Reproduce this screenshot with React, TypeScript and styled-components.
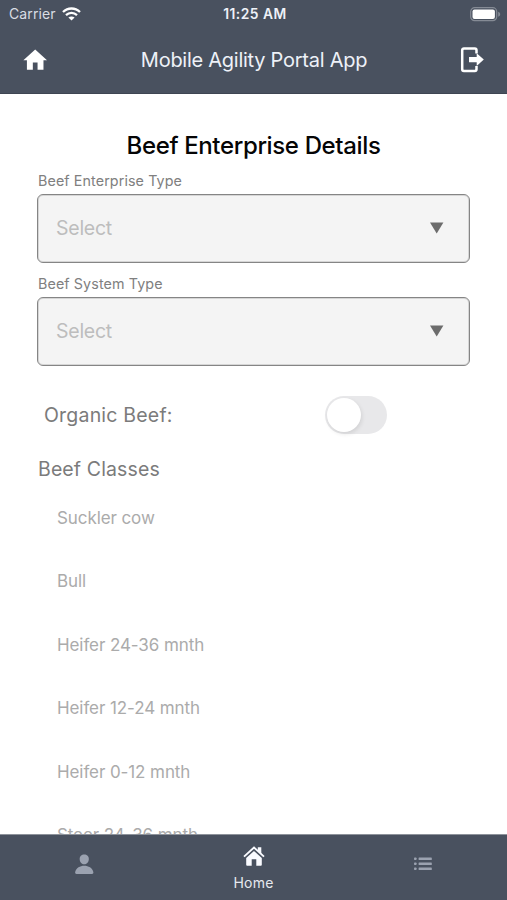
import React from "react";
import styled, { createGlobalStyle } from "styled-components";
import { IoPerson } from "react-icons/io5";

const GlobalStyle = createGlobalStyle`
  * { box-sizing: border-box; }
  body { margin: 0; background: #fff; font-family: Inter, "Liberation Sans", sans-serif; }
`;

const Screen = styled.div`
  width: 507px;
  height: 900px;
  display: flex;
  flex-direction: column;
  overflow: hidden;
  background: #fff;
`;

const Top = styled.header`
  flex: none;
  height: 94px;
  background: #49515f;
  border-bottom: 1px solid #3e4552;
  color: #eef1f8;
`;

const StatusBar = styled.div`
  height: 28px;
  display: grid;
  grid-template-columns: 1fr auto 1fr;
  align-items: center;
  padding: 0 6px 0 9px;
  font-size: 14px;
  line-height: 28px;
`;

const Carrier = styled.div`
  display: flex;
  align-items: center;
  gap: 6px;
  letter-spacing: 0.1px;
  color: #d9dde4;
`;

const Clock = styled.div`
  font-weight: 600;
  font-size: 13.8px;
  letter-spacing: 0.5px;
`;

const BatterySlot = styled.div`
  display: flex;
  justify-content: flex-end;
`;

const NavBar = styled.div`
  height: 64px;
  display: grid;
  grid-template-columns: 60px 1fr 60px;
  align-items: center;
  padding: 0 20px 0 21px;
`;

const NavTitle = styled.h1`
  margin: 0;
  text-align: center;
  font-weight: 400;
  font-size: 20px;
  line-height: 24px;
  letter-spacing: -0.26px;
  white-space: nowrap;
`;

const NavAction = styled.div<{ $end?: boolean }>`
  display: flex;
  justify-content: ${(p) => (p.$end ? "flex-end" : "flex-start")};
  padding-right: ${(p) => (p.$end ? "3px" : "0")};
`;

const Content = styled.main`
  flex: 1;
  min-height: 0;
  overflow: hidden;
  padding: 37px 37px 0 37px;
`;

const Heading = styled.h2`
  margin: 0 0 12px;
  text-align: center;
  font-weight: 500;
  font-size: 24px;
  line-height: 30px;
  letter-spacing: -0.36px;
  color: #050505;
`;

const Field = styled.div`
  height: 103px;
`;

const Label = styled.div`
  height: 21px;
  padding-left: 1px;
  font-size: 14.3px;
  line-height: 16px;
  letter-spacing: 0.1px;
  color: #808080;
`;

const SelectBox = styled.div`
  height: 69px;
  display: flex;
  align-items: center;
  justify-content: space-between;
  padding: 0 25px 2px 18px;
  border: 1px solid #858585;
  border-radius: 6px;
  background: #f4f4f4;
  box-shadow: inset 0 0 0 1px #d6d6d6;
  font-size: 19.5px;
  letter-spacing: -0.25px;
  color: #bdbdbd;
`;

const Arrow = styled.svg`
  display: block;
`;

const ToggleRow = styled.div`
  height: 40px;
  margin-top: 16px;
  display: flex;
  align-items: center;
  padding-left: 7px;
`;

const ToggleLabel = styled.div`
  width: 281px;
  font-size: 19.5px;
  letter-spacing: 0.2px;
  color: #7b7b7b;
`;

const Track = styled.div`
  width: 62px;
  height: 38px;
  padding: 2px;
  border-radius: 19px;
  background: #e8e8ea;
`;

const Thumb = styled.div`
  width: 34px;
  height: 34px;
  border-radius: 50%;
  background: #fff;
  box-shadow: 1px 2px 4px rgba(0, 0, 0, 0.1);
`;

const Section = styled.h3`
  margin: 20px 0 0;
  padding-left: 1px;
  height: 28px;
  font-weight: 400;
  font-size: 19.5px;
  line-height: 28px;
  letter-spacing: 0.12px;
  color: #7b7b7b;
`;

const ClassList = styled.ul`
  margin: 3px 0 0;
  padding: 0 0 0 20px;
  list-style: none;
`;

const ClassItem = styled.li`
  height: 63.4px;
  font-size: 17px;
  line-height: 64px;
  letter-spacing: -0.09px;
  color: #ababab;
`;

const TabBar = styled.nav`
  flex: none;
  height: 66px;
  display: grid;
  grid-template-columns: repeat(3, 1fr);
  background: #49515f;
  border-top: 1px solid #8e939b;
`;

const Tab = styled.div<{ $top: number; $active?: boolean }>`
  display: flex;
  flex-direction: column;
  align-items: center;
  padding-top: ${(p) => p.$top}px;
  color: ${(p) => (p.$active ? "#fafbff" : "#9ba2b0")};
`;

const TabLabel = styled.span`
  margin-top: 8px;
  font-size: 14px;
  line-height: 18px;
  letter-spacing: 0.2px;
  color: #e6e9ef;
`;

const classes = [
  "Suckler cow",
  "Bull",
  "Heifer 24-36 mnth",
  "Heifer 12-24 mnth",
  "Heifer 0-12 mnth",
  "Steer 24-36 mnth",
];

const WifiIcon = () => (
  <svg width="19" height="14" viewBox="0 0 19 14" fill="none" stroke="#fff" strokeWidth="2.3">
    <path d="M1 5C5.8 .3 13.2 .3 18 5" />
    <path d="M4 8.2c3.2-3 7.8-3 11 0" />
    <path d="M9.5 13.6 6.4 10.5c1.8-1.5 4.4-1.500 6.200 0z" fill="#fff" stroke="none" />
  </svg>
);

const BatteryIcon = () => (
  <svg width="31" height="15" viewBox="0 0 31 15">
    <rect x=".7" y=".7" width="26" height="13" rx="4" fill="none" stroke="#858b95" strokeWidth="1.2" />
    <rect x="2.5" y="2.5" width="22.4" height="9.400" rx="2" fill="#fff" />
    <path d="M28.200 4.700v5c1.300-.4 2-1.400 2-2.500s-.7-2.100-2-2.500z" fill="#858b95" />
  </svg>
);

const HomeIcon = () => (
  <svg width="28.4" height="28.4" viewBox="0 0 24 24" fill="#fff">
    <path d="M10 20v-6h4v6h5v-8h3L12 3 2 12h3v8z" />
  </svg>
);

const LogoutIcon = () => (
  <svg width="26" height="28" viewBox="0 0 26 28">
    <path
      d="M18.500 7.500V4.200a1.700 1.700 0 0 0-1.700-1.700H5.900a1.700 1.700 0 0 0-1.700 1.700v19a1.700 1.700 0 0 0 1.700 1.700h10.900a1.700 1.700 0 0 0 1.700-1.700V20"
      fill="none"
      stroke="#fff"
      strokeWidth="2.500"
    />
    <path d="M11 10.900h7.700V7.300L25.800 13.600l-7.100 6.300v-3.600H11z" fill="#fff" />
  </svg>
);

const TabHomeIcon = () => (
  <svg width="22" height="20" viewBox="0 0 22 20">
    <path d="M14.800 1.200h3.500v7l-3.500-3.300z" fill="currentColor" />
    <path d="M1 10.600 11 1.500l10 9.100" fill="none" stroke="currentColor" strokeWidth="1.900" />
    <path d="M11 5.100l7.800 7V18.800a.9.900 0 0 1-.9.900h-4.600v-6.400H8.700v6.400H4.100a.9.900 0 0 1-.9-.9v-6.700z" fill="currentColor" />
  </svg>
);

const ListIcon = () => (
  <svg width="18" height="14" viewBox="0 0 18 14" fill="currentColor">
    {[0.5, 5.5, 10.500].map((y) => (
      <g key={y}>
        <rect x="0" y={y} width="2.600" height="2.600" rx=".8" />
        <rect x="4.600" y={y} width="13.200" height="2.600" rx=".6" />
      </g>
    ))}
  </svg>
);

const SelectField = ({ label }: { label: string }) => (
  <Field>
    <Label>{label}</Label>
    <SelectBox>
      Select
      <Arrow width="15" height="12" viewBox="0 0 15 12">
        <path d="M1 .5h13.400L7.700 11.500z" fill="#6c6c6c" />
      </Arrow>
    </SelectBox>
  </Field>
);

export default function App() {
  return (
    <Screen>
      <GlobalStyle />
      <Top>
        <StatusBar>
          <Carrier>
            Carrier
            <WifiIcon />
          </Carrier>
          <Clock>11:25 AM</Clock>
          <BatterySlot>
            <BatteryIcon />
          </BatterySlot>
        </StatusBar>
        <NavBar>
          <NavAction>
            <HomeIcon />
          </NavAction>
          <NavTitle>Mobile Agility Portal App</NavTitle>
          <NavAction $end>
            <LogoutIcon />
          </NavAction>
        </NavBar>
      </Top>
      <Content>
        <Heading>Beef Enterprise Details</Heading>
        <SelectField label="Beef Enterprise Type" />
        <SelectField label="Beef System Type" />
        <ToggleRow>
          <ToggleLabel>Organic Beef:</ToggleLabel>
          <Track>
            <Thumb />
          </Track>
        </ToggleRow>
        <Section>Beef Classes</Section>
        <ClassList>
          {classes.map((name) => (
            <ClassItem key={name}>{name}</ClassItem>
          ))}
        </ClassList>
      </Content>
      <TabBar>
        <Tab $top={18}>
          <IoPerson size={22.5} />
        </Tab>
        <Tab $top={11} $active>
          <TabHomeIcon />
          <TabLabel>Home</TabLabel>
        </Tab>
        <Tab $top={22}>
          <ListIcon />
        </Tab>
      </TabBar>
    </Screen>
  );
}
